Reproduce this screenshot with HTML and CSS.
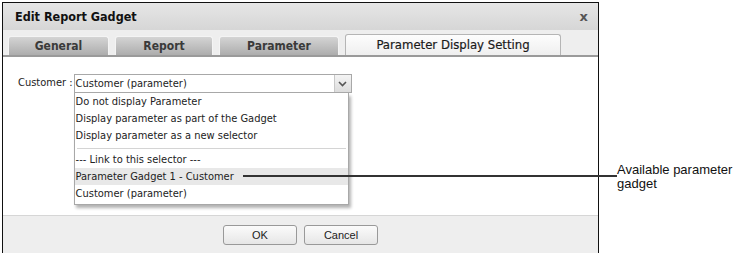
FILE: index.html
```html
<!DOCTYPE html>
<html lang="en">
<head>
    <meta charset="UTF-8">
    <title>Edit Report Gadget</title>
    <link rel="stylesheet" href="styles.css">
</head>
<body>
    <div class="page">
        <div class="dialog">
            <div class="title-bar">
                <span class="title">Edit Report Gadget</span>
                <span class="close">x</span>
            </div>
            <div class="tabs">
                <div class="tab tab-general">General</div>
                <div class="tab tab-report">Report</div>
                <div class="tab tab-parameter">Parameter</div>
                <div class="tab tab-active">Parameter Display Setting</div>
            </div>
            <div class="content">
                <div class="field">
                    <span class="label">Customer :</span>
                    <div class="combo">
                        <div class="select">
                            <span class="select-text">Customer (parameter)</span>
                            <span class="arrow">
                                <svg width="9" height="6" viewBox="0 0 9 6"><path d="M1 1 L4.5 4.5 L8 1" fill="none" stroke="#555" stroke-width="1.6"/></svg>
                            </span>
                        </div>
                        <ul class="list">
                            <li>Do not display Parameter</li>
                            <li>Display parameter as part of the Gadget</li>
                            <li>Display parameter as a new selector</li>
                            <li class="sep"></li>
                            <li>--- Link to this selector ---</li>
                            <li class="selected">Parameter Gadget 1 - Customer</li>
                            <li>Customer (parameter)</li>
                        </ul>
                    </div>
                </div>
            </div>
            <div class="footer">
                <button class="btn">OK</button>
                <button class="btn">Cancel</button>
            </div>
        </div>
    </div>
    <div class="callout-line"></div>
    <div class="callout-text">Available parameter<br>gadget</div>
</body>
</html>
```

FILE: styles.css
```css
body {
    margin: 0;
    background-color: white;
    font-family: "DejaVu Sans Condensed", "DejaVu Sans", sans-serif;
    font-size: 11px;
    color: #222;
}
.page {
    padding: 2px 0 0 2px;
}
.dialog {
    width: 595px;
    height: 250px;
    border: 1px solid #111;
    border-bottom: none;
    display: flex;
    flex-direction: column;
    background-color: white;
}
.title-bar {
    height: 27px;
    background: linear-gradient(#e6e6e6, #d6d6d6);
    display: flex;
    align-items: center;
    justify-content: space-between;
    padding: 0 10px 0 12px;
}
.title {
    font-family: "DejaVu Sans Condensed", sans-serif;
    font-weight: bold;
    font-size: 12.5px;
    color: #111;
}
.close {
    font-family: "DejaVu Sans", sans-serif;
    font-weight: bold;
    font-size: 13px;
    color: #555;
}
.tabs {
    height: 25px;
    background-color: #eeeeee;
    border-bottom: 2px solid #9a9a9a;
    display: flex;
    align-items: flex-end;
    padding-left: 5px;
    gap: 6px;
}
.tab {
    height: 18px;
    line-height: 18px;
    text-align: center;
    font-weight: bold;
    font-size: 12px;
    color: #3a3a3a;
    background: linear-gradient(#d4d4d4, #adadad);
    border: 1px solid #f4f4f4;
    border-bottom: none;
    border-radius: 3px 3px 0 0;
}
.tab-general { width: 99px; }
.tab-report { width: 96px; }
.tab-parameter { width: 118px; }
.tab-active {
    width: 214px;
    height: 20px;
    line-height: 20px;
    font-weight: normal;
    font-size: 13px;
    background: linear-gradient(#fdfdfd, #efefef);
    border: 1px solid #b5b5b5;
    border-bottom: none;
    color: #1a1a1a;
    -webkit-text-stroke: 0.2px #1a1a1a;
}
.content {
    flex: 1;
    padding: 17px 0 0 15px;
}
.field {
    display: flex;
    align-items: flex-start;
    gap: 1px;
}
.label {
    line-height: 18px;
}
.combo {
    display: flex;
    flex-direction: column;
}
.select {
    width: 276px;
    height: 17px;
    border: 1px solid #a8a8a8;
    display: flex;
    justify-content: space-between;
    align-items: stretch;
}
.select-text {
    line-height: 17px;
    padding-left: 1px;
}
.arrow {
    width: 16px;
    border-left: 1px solid #c8c8c8;
    background: linear-gradient(#f4f4f4, #dcdcdc);
    display: flex;
    align-items: center;
    justify-content: center;
}
.list {
    list-style: none;
    margin: 0;
    padding: 0 0 2px 0;
    width: 273px;
    border: 1px solid #a8a8a8;
    border-top: none;
    box-shadow: 2px 3px 3px rgba(0,0,0,0.3);
    background-color: white;
}
.list li {
    height: 17px;
    line-height: 17px;
    padding-left: 1px;
}
.list li.sep {
    height: 0;
    margin: 4px 2px 2px 2px;
    border-top: 1px solid #d4d4d4;
}
.list li.selected {
    background-color: #e8e8e8;
}
.footer {
    height: 37px;
    background-color: #eeeeee;
    border-top: 1px solid #d6d6d6;
    display: flex;
    justify-content: center;
    align-items: center;
    gap: 7px;
}
.btn {
    width: 74px;
    height: 20px;
    font-family: "Liberation Sans", Arial, sans-serif;
    font-size: 11px;
    color: #222;
    background: linear-gradient(#fbfbfb, #e6e6e6);
    border: 1px solid #999;
    border-radius: 3px;
    padding: 0;
}
.callout-line {
    position: absolute;
    left: 243px;
    top: 175px;
    width: 374px;
    height: 2px;
    background-color: #333;
}
.callout-text {
    position: absolute;
    left: 617px;
    top: 163px;
    font-family: "Liberation Sans", Arial, sans-serif;
    font-size: 13px;
    line-height: 14px;
    color: #111;
}
```
